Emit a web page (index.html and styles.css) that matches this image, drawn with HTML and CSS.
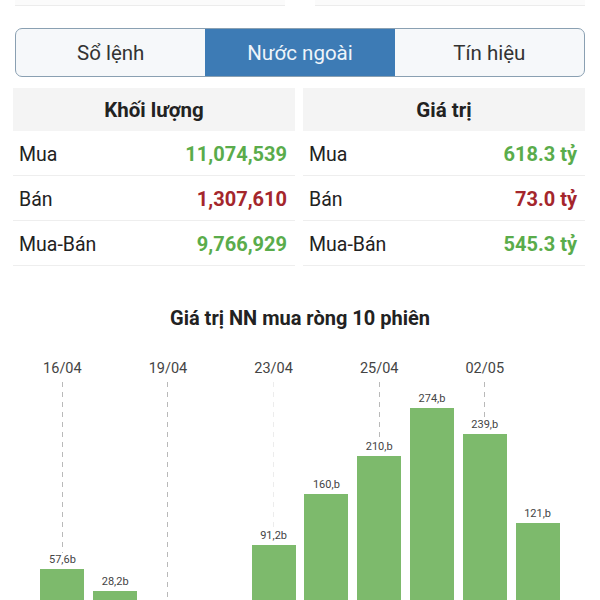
FILE: index.html
```html
<!DOCTYPE html>
<html lang="vi">
<head>
    <meta charset="UTF-8">
    <meta name="viewport" content="width=device-width, initial-scale=1.0">
    <title>Nước ngoài</title>
    <link rel="stylesheet" href="styles.css">
</head>
<body>
    <div class="top-cards">
        <div class="top-card"></div>
        <div class="top-card"></div>
    </div>

    <div class="tabs">
        <div class="tab">Sổ lệnh</div>
        <div class="tab active">Nước ngoài</div>
        <div class="tab">Tín hiệu</div>
    </div>

    <div class="stats">
        <div class="stat-table">
            <div class="stat-head">Khối lượng</div>
            <div class="stat-row"><span>Mua</span><span class="up">11,074,539</span></div>
            <div class="stat-row"><span>Bán</span><span class="down">1,307,610</span></div>
            <div class="stat-row"><span>Mua-Bán</span><span class="up">9,766,929</span></div>
        </div>
        <div class="stat-table">
            <div class="stat-head">Giá trị</div>
            <div class="stat-row"><span>Mua</span><span class="up">618.3 tỷ</span></div>
            <div class="stat-row"><span>Bán</span><span class="down">73.0 tỷ</span></div>
            <div class="stat-row"><span>Mua-Bán</span><span class="up">545.3 tỷ</span></div>
        </div>
    </div>

    <div class="chart">
        <h2 class="chart-title">Giá trị NN mua ròng 10 phiên</h2>
        <div class="plot">
            <div class="col">
                <div class="date">16/04</div>
                <div class="area guide">
                    <div class="val">57,6b</div>
                    <div class="bar" style="height: 44px"></div>
                </div>
            </div>
            <div class="col">
                <div class="date"></div>
                <div class="area">
                    <div class="val">28,2b</div>
                    <div class="bar" style="height: 22px"></div>
                </div>
            </div>
            <div class="col">
                <div class="date">19/04</div>
                <div class="area guide"></div>
            </div>
            <div class="col">
                <div class="date"></div>
                <div class="area"></div>
            </div>
            <div class="col">
                <div class="date">23/04</div>
                <div class="area guide faint">
                    <div class="val">91,2b</div>
                    <div class="bar" style="height: 68px"></div>
                </div>
            </div>
            <div class="col">
                <div class="date"></div>
                <div class="area">
                    <div class="val">160,b</div>
                    <div class="bar" style="height: 119px"></div>
                </div>
            </div>
            <div class="col">
                <div class="date">25/04</div>
                <div class="area guide">
                    <div class="val">210,b</div>
                    <div class="bar" style="height: 157px"></div>
                </div>
            </div>
            <div class="col">
                <div class="date"></div>
                <div class="area">
                    <div class="val">274,b</div>
                    <div class="bar" style="height: 205px"></div>
                </div>
            </div>
            <div class="col">
                <div class="date">02/05</div>
                <div class="area guide">
                    <div class="val">239,b</div>
                    <div class="bar" style="height: 179px"></div>
                </div>
            </div>
            <div class="col">
                <div class="date"></div>
                <div class="area">
                    <div class="val">121,b</div>
                    <div class="bar" style="height: 90px"></div>
                </div>
            </div>
        </div>
    </div>
</body>
</html>
```

FILE: styles.css
```css
body {
    font-family: Roboto, "Noto Sans", sans-serif;
    background-color: white;
    color: #222;
    margin: 0;
    padding: 0;
    overflow: hidden;
}
.top-cards {
    display: grid;
    grid-template-columns: 1fr 1fr;
    gap: 30px;
    padding: 0 15px;
}
.top-card {
    height: 5px;
    background: #fbfbfb;
    border-bottom: 1px solid #ececec;
}
.tabs {
    display: flex;
    margin: 22px 15px 0 15px;
    height: 47px;
    border: 1.5px solid #8aa0b2;
    border-radius: 7px;
    background: #f6f8fa;
    overflow: hidden;
}
.tab {
    flex: 1;
    display: flex;
    align-items: center;
    justify-content: center;
    font-size: 20.5px;
    color: #333;
}
.tab.active {
    background: #3d7bb5;
    color: #eef4fa;
}
.stats {
    display: grid;
    grid-template-columns: 1fr 1fr;
    gap: 8px;
    padding: 0 15px 0 13px;
    margin-top: 11px;
}
.stat-head {
    height: 43px;
    background: #f4f4f4;
    display: flex;
    align-items: center;
    justify-content: center;
    font-size: 20.5px;
    font-weight: bold;
}
.stat-row {
    height: 42px;
    padding: 2px 8px 0 6px;
    display: flex;
    align-items: center;
    justify-content: space-between;
    border-bottom: 1px solid #eeeeee;
    font-size: 19.5px;
}
.stat-row .up, .stat-row .down {
    font-weight: bold;
    font-size: 20px;
}
.up {
    color: #5aac4b;
}
.down {
    color: #a4262c;
}
.chart-title {
    margin: 40px 0 0;
    text-align: center;
    font-size: 20px;
    line-height: 24px;
    font-weight: bold;
}
.plot {
    display: flex;
    padding-left: 36px;
    margin-top: 28px;
}
.col {
    width: 52.8px;
    display: flex;
    flex-direction: column;
    align-items: center;
}
.date {
    height: 22px;
    font-size: 14.5px;
    line-height: 22px;
    color: #444;
}
.area {
    height: 231px;
    width: 100%;
    margin-top: 2px;
    display: flex;
    flex-direction: column;
    justify-content: flex-end;
    align-items: center;
}
.guide {
    background-image: repeating-linear-gradient(to bottom, #b9b9b9 0 5px, transparent 5px 10px);
    background-size: 1px 100%;
    background-repeat: no-repeat;
    background-position: center top;
}
.guide.faint {
    background-image: repeating-linear-gradient(to bottom, #ececec 0 5px, transparent 5px 10px);
}
.val {
    font-size: 11px;
    color: #444;
    background: white;
    padding: 0 1px 3px;
}
.bar {
    width: 44px;
    background: #7dba6c;
}
```
